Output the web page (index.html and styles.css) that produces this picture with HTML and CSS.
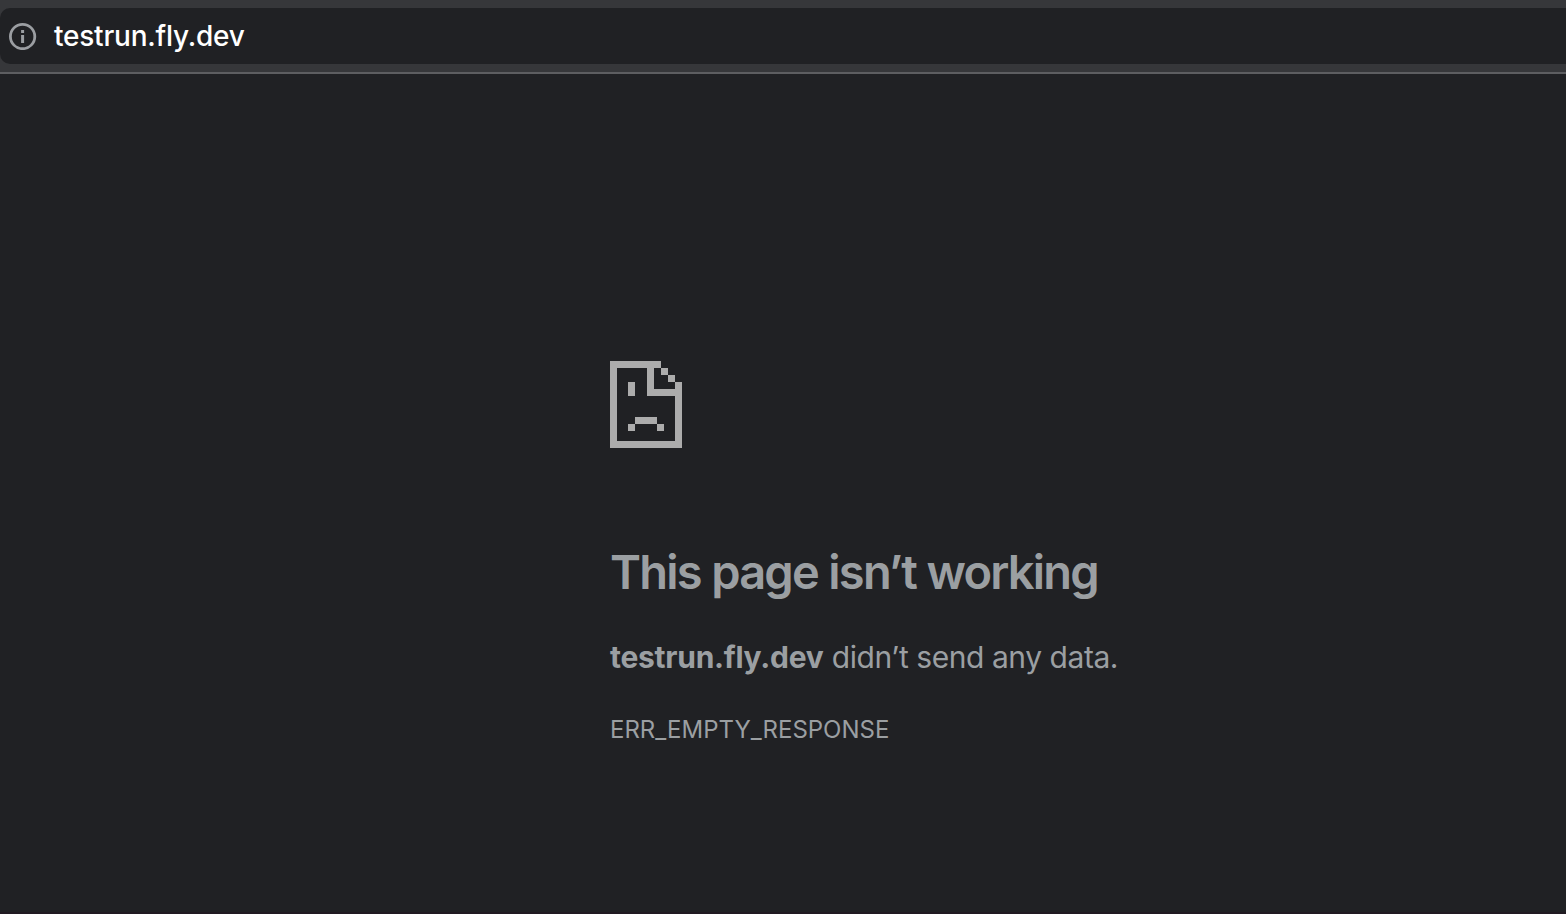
FILE: index.html
```html
<!DOCTYPE html>
<html lang="en">
<head>
<meta charset="utf-8">
<title>testrun.fly.dev</title>
<link rel="stylesheet" href="styles.css">
</head>
<body>
<header class="toolbar">
  <div class="address-bar">
    <svg class="info-icon" viewBox="0 0 28 28" width="28" height="28" aria-hidden="true">
      <circle cx="13.6" cy="14.5" r="12.2" fill="none" stroke="#9b9ea2" stroke-width="2.8"/>
      <path d="M12.1 8h3v3h-3zM12.1 13h3v8h-3z" fill="#9b9ea2"/>
    </svg>
    <span class="url">testrun.fly.dev</span>
  </div>
</header>
<main class="error-page">
  <svg class="sad-page" viewBox="0 0 72 87" width="72" height="87" shape-rendering="crispEdges" aria-hidden="true">
    <path fill="#acacac" fill-rule="evenodd" d="M0 0H51V7H58V14H65V21H72V87H0ZM7 7V80H65V35H37V7ZM44 7V28H65V21H58V14H51V7Z"/>
    <path fill="#acacac" d="M18 21h7v14h-7zM25 56h22v7h-22zM18 63h7v7h-7zM47 63h7v7h-7z"/>
  </svg>
  <h1 class="title">This page isn’t working</h1>
  <p class="summary"><strong class="host">testrun.fly.dev</strong> <span class="reason">didn’t send any data.</span></p>
  <p class="error-code">ERR_EMPTY_RESPONSE</p>
</main>
</body>
</html>
```
FILE: styles.css
```css
* {
  box-sizing: border-box;
}

body {
  margin: 0;
  height: 914px;
  overflow: hidden;
  background: #202124;
  color: #9b9fa2;
  font-family: Inter, "Liberation Sans", sans-serif;
}

.toolbar {
  height: 74px;
  padding-top: 8px;
  background: #36373a;
  border-bottom: 2px solid #5d5e61;
}

.address-bar {
  display: flex;
  align-items: center;
  gap: 17px;
  height: 56px;
  padding-left: 9px;
  background: #202124;
  border-radius: 10px 0 0 10px;
}

.info-icon {
  flex: none;
}

.url {
  color: #fff;
  font-size: 28px;
  line-height: 40px;
  font-weight: 500;
  letter-spacing: -0.22px;
  white-space: nowrap;
}

.error-page {
  height: 840px;
  padding: 287px 0 0 610px;
  border-bottom: 2px solid #211a22;
  white-space: nowrap;
}

.sad-page {
  display: block;
}

.title {
  margin: 94px 0 0;
  font-size: 47px;
  line-height: 59px;
  font-weight: 600;
  letter-spacing: -1.8px;
  word-spacing: 0.4px;
}

.summary {
  margin: 32px 0 0;
  font-size: 30px;
  line-height: 48px;
}

.host {
  font-weight: 700;
  letter-spacing: -0.27px;
}

.reason {
  letter-spacing: -0.45px;
}

.error-code {
  margin: 30px 0 0;
  font-size: 24px;
  line-height: 38px;
}
```
